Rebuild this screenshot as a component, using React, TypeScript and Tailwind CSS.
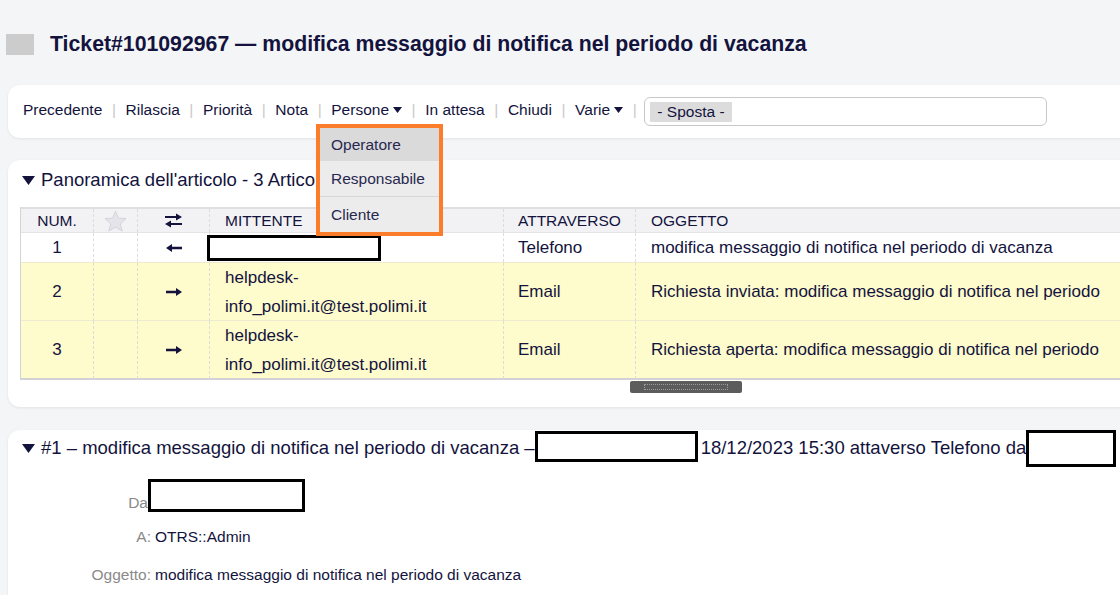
import React from 'react';

const Sep = () => <span className="mx-[9.6px] text-[#c9c9c9]">|</span>;

const Caret = () => (
  <svg width="9" height="6" viewBox="0 0 9 6" className="ml-[4px] inline-block">
    <path d="M0 0 H9 L4.5 6 Z" fill="#13133d" />
  </svg>
);

const Toggle = () => (
  <svg width="13" height="9" viewBox="0 0 13 9" className="mr-[6px] shrink-0">
    <path d="M0 0 H13 L6.5 9 Z" fill="#13133d" />
  </svg>
);

const Redacted = ({ w, h, className = '' }: { w: string; h: string; className?: string }) => (
  <div className={`${w} ${h} border-[3px] border-black bg-white shrink-0 ${className}`} />
);

const Arrow = ({ dir }: { dir: 'left' | 'right' }) => (
  <svg width="18" height="10" viewBox="0 0 18 10">
    {dir === 'right' ? (
      <path d="M1 3.8 H11 V1 L17 5 L11 9 V6.2 H1 Z" fill="#13133d" />
    ) : (
      <path d="M17 3.8 H7 V1 L1 5 L7 9 V6.2 H17 Z" fill="#13133d" />
    )}
  </svg>
);

const Swap = () => (
  <svg width="19" height="15" viewBox="0 0 19 15">
    <path d="M1 3 H12 V0.5 L18 4 L12 7.5 V5 H1 Z" fill="#13133d" />
    <path d="M18 10 H7 V7.5 L1 11 L7 14.5 V12 H18 Z" fill="#13133d" />
  </svg>
);

const Star = () => (
  <svg width="23" height="22" viewBox="0 0 24 23">
    <path
      d="M12 1 L15 8.5 L23 9 L17 14.5 L19 22 L12 18 L5 22 L7 14.5 L1 9 L9 8.5 Z"
      fill="#e4e4ea"
      stroke="#d2d2da"
      strokeWidth="1"
      strokeLinejoin="round"
    />
  </svg>
);

const cols = 'grid grid-cols-[72px_44px_72px_294px_132px_1fr]';
const cell = 'border-l border-dashed border-[#dcdcdc] flex items-center';

const rows = [
  { n: '1', dir: 'left' as const, via: 'Telefono', subj: 'modifica messaggio di notifica nel periodo di vacanza', yellow: false },
  { n: '2', dir: 'right' as const, via: 'Email', subj: 'Richiesta inviata: modifica messaggio di notifica nel periodo', yellow: true },
  { n: '3', dir: 'right' as const, via: 'Email', subj: 'Richiesta aperta: modifica messaggio di notifica nel periodo', yellow: true },
];

const App: React.FC = () => {
  const actions = ['Precedente', 'Rilascia', 'Priorità', 'Nota'];
  return (
    <div className="relative min-h-screen w-[1120px] h-[595px] overflow-hidden bg-[#f4f5f7] font-['Liberation_Sans',Arial,sans-serif] text-[#13133d]">
      {/* Title */}
      <div className="flex items-center pt-[34px] pl-[6px]">
        <div className="w-[28px] h-[21px] bg-[#cccccc]" />
        <h1 className="ml-[16px] text-[21.25px] font-bold leading-[21px] whitespace-nowrap">
          Ticket#101092967 — modifica messaggio di notifica nel periodo di vacanza
        </h1>
      </div>

      {/* Toolbar */}
      <div className="relative mt-[30px] ml-[8px] mr-[-20px] h-[53px] bg-white rounded-xl shadow-[0_1px_3px_rgba(0,0,0,0.08)] flex items-center pl-[15px] pb-[3px] text-[15.5px]">
        {actions.map((a) => (
          <React.Fragment key={a}>
            <span>{a}</span>
            <Sep />
          </React.Fragment>
        ))}
        <span className="flex items-center">Persone<Caret /></span>
        <Sep />
        <span>In attesa</span>
        <Sep />
        <span>Chiudi</span>
        <Sep />
        <span className="flex items-center">Varie<Caret /></span>
        <Sep />
        <div className="-ml-[2px] mt-[3px] w-[403px] h-[29px] rounded-md border border-[#c8c8c8] flex items-center pl-[5px]">
          <span className="bg-[#dcdcdc] h-[20px] px-[7px] flex items-center">- Sposta -</span>
        </div>
      </div>

      {/* Dropdown */}
      <div className="absolute left-[316px] top-[124px] w-[127px] border-[4px] border-[#fb7d2a] bg-[#ececec] text-[15.5px] text-[#28284f] z-10">
        <div className="h-[33px] bg-[#dadada] flex items-center pl-[11px]">Operatore</div>
        <div className="h-[36px] border-b border-[#d6d6d6] flex items-center pl-[11px]">Responsabile</div>
        <div className="h-[35px] flex items-center pl-[11px]">Cliente</div>
      </div>

      {/* Article overview */}
      <div className="mt-[22px] ml-[8px] mr-[-20px] h-[247px] bg-white rounded-xl shadow-[0_1px_3px_rgba(0,0,0,0.08)] pl-[12px]">
        <div className="h-[47px] flex items-center pl-[2px] pb-[7px] text-[18.5px]">
          <Toggle />
          <span>Panoramica dell'articolo - 3 Articoli</span>
        </div>
        <div className="w-[1200px] border-l border-[#d4d4d4]">
          <div className={`${cols} h-[25px] bg-[#f2f2f5] border-t-2 border-[#dfdfe3] text-[15.5px]`}>
            <div className="flex items-center justify-center">NUM.</div>
            <div className={`${cell} justify-center`}><Star /></div>
            <div className={`${cell} justify-center`}><Swap /></div>
            <div className={`${cell} pl-[15px]`}>MITTENTE</div>
            <div className={`${cell} pl-[14px]`}>ATTRAVERSO</div>
            <div className={`${cell} pl-[15px]`}>OGGETTO</div>
          </div>
          {rows.map((r) => (
            <div
              key={r.n}
              className={`${cols} text-[17px] border-t ${r.yellow ? 'bg-[#fefbcc] h-[58px] border-[#ecebd0]' : 'bg-white h-[30px] border-[#e4e4e8]'}`}
            >
              <div className="flex items-center justify-center">{r.n}</div>
              <div className={cell} />
              <div className={`${cell} justify-center`}><Arrow dir={r.dir} /></div>
              <div className={`${cell} ${r.yellow ? 'pl-[15px]' : ''}`}>
                {r.yellow ? (
                  <div className="leading-[29px]">
                    helpdesk-
                    <br />
                    info_polimi.it@test.polimi.it
                  </div>
                ) : (
                  <Redacted w="w-[174px]" h="h-[26px]" className="-ml-[3px]" />
                )}
              </div>
              <div className={`${cell} pl-[14px]`}>{r.via}</div>
              <div className={`${cell} pl-[15px] whitespace-nowrap`}>{r.subj}</div>
            </div>
          ))}
          <div className="border-t-2 border-[#d2d2d6]" />
        </div>
        <div className="mt-[1px] ml-[610px] w-[112px] h-[12px] rounded-[2px] bg-[#5c5c5c] flex items-center justify-center">
          <div className="w-[84px] h-[6px] border border-dotted border-[#9a9a9a]" />
        </div>
      </div>

      {/* Article detail */}
      <div className="mt-[23px] ml-[8px] mr-[-20px] h-[200px] bg-white rounded-xl shadow-[0_1px_3px_rgba(0,0,0,0.08)]">
        <div className="h-[36px] flex items-center pl-[14px] text-[18.5px] whitespace-nowrap">
          <Toggle />
          <span>#1 – modifica messaggio di notifica nel periodo di vacanza –</span>
          <Redacted w="w-[163px]" h="h-[31px]" className="self-start mt-[1px]" />
          <span className="ml-[3px]">18/12/2023 15:30 attaverso Telefono da</span>
          <Redacted w="w-[90px]" h="h-[37px]" className="self-start" />
        </div>
        <div className="text-[15.5px]">
          <div className="flex items-end h-[46px]">
            <span className="w-[140px] text-right text-[#8a8a8a] leading-[18px]">Da</span>
            <Redacted w="w-[157px]" h="h-[33px]" />
          </div>
          <div className="flex items-center h-[38px] mt-[6px]">
            <span className="w-[143px] text-right text-[#8a8a8a]">A:</span>
            <span className="ml-[4px]">OTRS::Admin</span>
          </div>
          <div className="flex items-center h-[38px]">
            <span className="w-[143px] text-right text-[#8a8a8a]">Oggetto:</span>
            <span className="ml-[4px]">modifica messaggio di notifica nel periodo di vacanza</span>
          </div>
        </div>
      </div>
    </div>
  );
};

export default App;
